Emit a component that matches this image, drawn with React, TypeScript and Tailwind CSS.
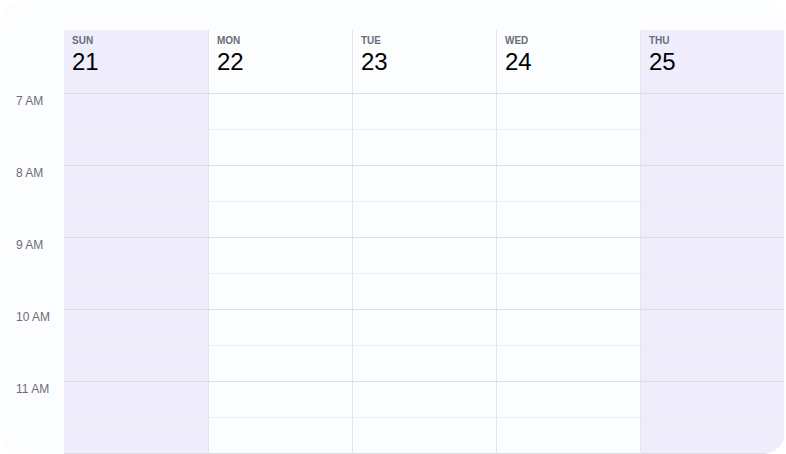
import React from "react";

const days = [
  { name: "SUN", date: 21, weekend: true },
  { name: "MON", date: 22, weekend: false },
  { name: "TUE", date: 23, weekend: false },
  { name: "WED", date: 24, weekend: false },
  { name: "THU", date: 25, weekend: true },
];

const hours = ["7 AM", "8 AM", "9 AM", "10 AM", "11 AM"];

const App: React.FC = () => {
  return (
    <div className="w-[786px] h-[454px] bg-white overflow-hidden font-['Liberation_Sans',Arial,sans-serif]">
      <div className="w-full h-full rounded-[24px] bg-[#fcfdff] flex overflow-hidden">
        {/* time gutter */}
        <div className="w-16 shrink-0 pt-[93px]">
          {hours.map((h) => (
            <div key={h} className="h-[72px] pl-4 text-xs leading-4 text-[#6b6d75]">
              {h}
            </div>
          ))}
        </div>

        {/* day columns */}
        {days.map((d, i) => (
          <div key={d.name} className="w-[144px] shrink-0 pt-[30px]">
            <div
              className={`flex flex-col h-full ${
                i > 0 ? "border-l border-[#e4e5ea]" : ""
              } ${d.weekend ? "bg-[#efedfc]" : ""}`}
            >
              <div className="h-[64px] px-2 pt-[5px] border-b border-[#dcdde2]">
                <div className="text-[10px] leading-3 font-bold text-[#6b6d75]">
                  {d.name}
                </div>
                <div className="text-2xl leading-[30px] text-black">{d.date}</div>
              </div>
              {hours.map((h) => (
                <div key={h}>
                  <div className="h-[36px] border-b border-[#eceef2]" />
                  <div className="h-[36px] border-b border-[#dcdde2]" />
                </div>
              ))}
            </div>
          </div>
        ))}
      </div>
    </div>
  );
};

export default App;
